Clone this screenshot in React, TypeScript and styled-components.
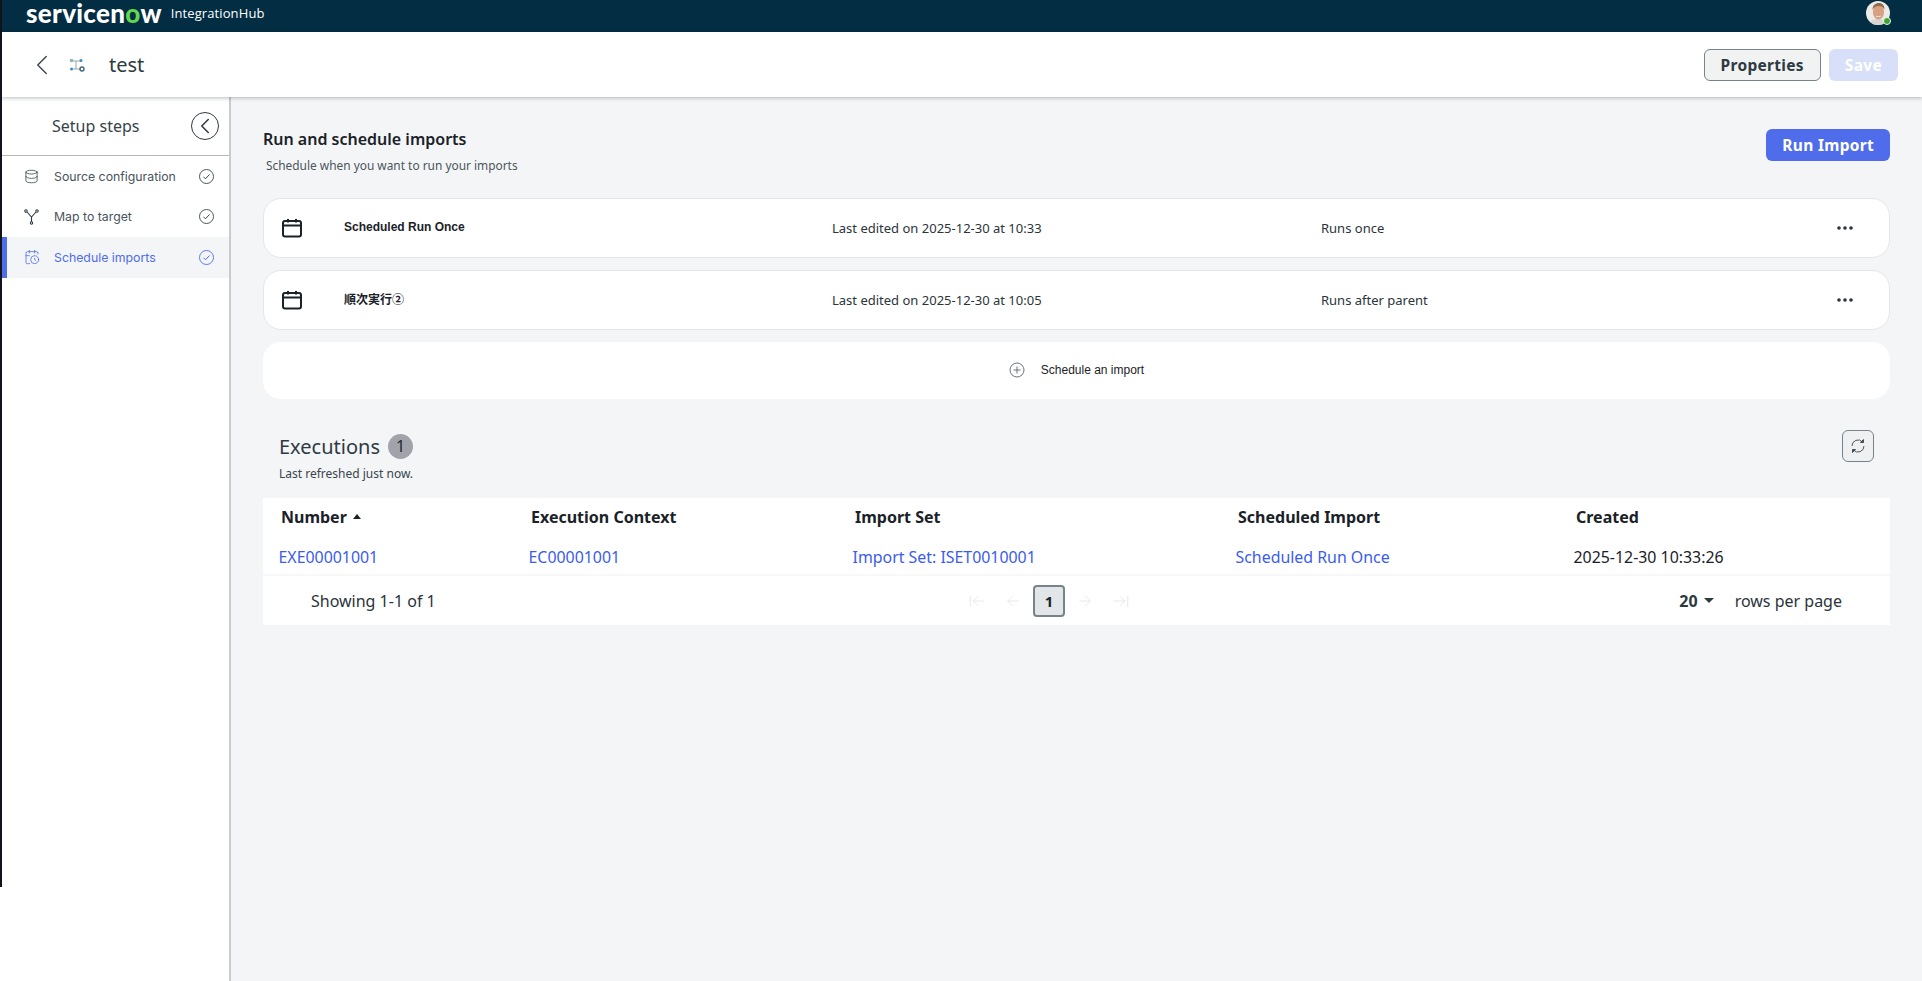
import styled, { createGlobalStyle } from 'styled-components'
import {
  ArrowLeft,
  ArrowLeftToLine,
  ArrowRight,
  ArrowRightToLine,
  CalendarClock,
  ChevronLeft,
  Database,
} from 'lucide-react'

const GlobalStyle = createGlobalStyle`
  html, body { margin: 0; padding: 0; height: 100%; overflow: hidden; background: #fff; }
  * { box-sizing: border-box; }
  body { font-family: "Noto Sans", "Open Sans", "Noto Sans CJK JP", sans-serif; color: #1a2228; }
`

const Page = styled.div`
  position: relative;
  display: flex;
  flex-direction: column;
  width: 100%;
  height: 100vh;
`
const EdgeStrip = styled.div`
  position: absolute;
  left: 0;
  top: 0;
  width: 2px;
  height: 887px;
  background: #10141a;
  z-index: 5;
`
const TopBar = styled.header`
  display: flex;
  align-items: flex-start;
  justify-content: space-between;
  height: 32px;
  padding: 0 32px 0 26px;
  background: #032d42;
  flex: none;
`
const Brand = styled.div`
  display: flex;
  align-items: center;
  gap: 9px;
  color: #fff;
`
const Logo = styled.span`
  font-family: "Lato", sans-serif;
  font-weight: 900;
  font-size: 26px;
  line-height: 26px;
  letter-spacing: 0.3px;
  b { color: #62d84e; font-weight: 900; }
`
const Product = styled.span`
  font-size: 13px;
  line-height: 18px;
  font-family: "Open Sans", sans-serif;
  letter-spacing: 0.1px;
`
const AvatarWrap = styled.div`
  position: relative;
  width: 24px;
  height: 24px;
  margin-top: 1px;
`
const StatusDot = styled.span`
  position: absolute;
  right: -1px;
  bottom: 0;
  width: 8px;
  height: 8px;
  border-radius: 50%;
  background: #3ea62f;
  border: 1px solid #e9f5e6;
`
const SubHeader = styled.div`
  display: flex;
  align-items: center;
  height: 65px;
  padding: 0 24px 0 25px;
  background: #fff;
  box-shadow: 0 1px 4px rgba(20, 30, 40, 0.3);
  position: relative;
  z-index: 2;
  flex: none;
`
const BackButton = styled.span`
  display: flex;
  color: #3c474f;
`
const FlowIcon = styled.svg`
  width: 16px;
  height: 14px;
  margin-left: 10px;
`
const Title = styled.h1`
  margin: 0 0 0 24px;
  font-size: 20px;
  font-weight: 400;
  color: #2e3a42;
  flex: 1;
`
const ActionButton = styled.button<{ $kind: 'outline' | 'disabled' | 'primary' }>`
  height: 32px;
  padding: 0 16px;
  border-radius: 6px;
  font-family: "Noto Sans", sans-serif;
  font-size: 15.5px;
  font-weight: 700;
  letter-spacing: 0.3px;
  border: ${(p) => (p.$kind === 'outline' ? '1px solid #77838b' : 'none')};
  color: ${(p) => (p.$kind === 'outline' ? '#2e3a42' : '#fff')};
  background: ${(p) =>
    p.$kind === 'outline' ? '#f1f3f3' : p.$kind === 'disabled' ? '#d7dff9' : '#4f6deb'};
`
const SaveButton = styled(ActionButton)`
  margin-left: 8px;
`
const Body = styled.div`
  display: flex;
  flex: 1;
  min-height: 0;
  padding-left: 2px;
`
const Sidebar = styled.aside`
  width: 229px;
  flex: none;
  background: #fff;
  border-right: 2px solid #c9cccf;
`
const SideTitle = styled.div`
  position: relative;
  display: flex;
  align-items: center;
  height: 59px;
  padding-left: 50px;
  font-size: 16px;
  color: #36424a;
  border-bottom: 1px solid #b4b8bb;
`
const CollapseButton = styled.span`
  position: absolute;
  right: 10px;
  top: 15px;
  display: flex;
  align-items: center;
  justify-content: center;
  width: 28px;
  height: 28px;
  border-radius: 50%;
  border: 1.5px solid #2e3a42;
  color: #2e3a42;
  svg { flex: none; }
`
const StepList = styled.nav`
  display: flex;
  flex-direction: column;
`
const Step = styled.div<{ $active?: boolean }>`
  display: flex;
  align-items: center;
  height: 40.5px;
  padding-left: ${(p) => (p.$active ? '17px' : '22px')};
  padding-right: 15px;
  font-family: "Inter", sans-serif;
  font-size: 12.3px;
  color: ${(p) => (p.$active ? '#4f6deb' : '#48545c')};
  background: ${(p) => (p.$active ? '#f3f5f7' : 'transparent')};
  border-left: ${(p) => (p.$active ? '5px solid #4f6deb' : 'none')};
`
const StepIcon = styled.span<{ $active?: boolean }>`
  display: flex;
  width: 30px;
  color: ${(p) => (p.$active ? '#4f6deb' : '#2e3a42')};
`
const StepLabel = styled.span`
  flex: 1;
`
const Main = styled.main`
  flex: 1;
  min-width: 0;
  background: #f4f5f7;
  padding: 32px 32px 0 32px;
`
const SectionHead = styled.div`
  display: flex;
  justify-content: space-between;
  height: 69px;
`
const Heading = styled.h2`
  margin: 0;
  font-size: 16px;
  line-height: 20px;
  font-weight: 600;
  color: #1a2228;
`
const SubHeading = styled.p`
  margin: 8px 0 0 3px;
  font-size: 11.9px;
  line-height: 17px;
  color: #4a555c;
`
const Cards = styled.div`
  display: flex;
  flex-direction: column;
  gap: 12px;
`
const ScheduleCard = styled.div`
  display: grid;
  grid-template-columns: 80px 488px 489px 1fr 53px;
  align-items: center;
  height: 60px;
  background: #fff;
  border: 1px solid #e3e6e8;
  border-radius: 18px;
  font-size: 13px;
  color: #2a343b;
`
const CardIcon = styled.span`
  display: flex;
  padding-left: 17px;
`
const CardName = styled.span`
  font-family: "Liberation Sans", "Noto Sans CJK JP", sans-serif;
  font-size: 12px;
  font-weight: 700;
  color: #1a2228;
  margin-top: -3px;
`
const AddCard = styled.div`
  display: flex;
  align-items: center;
  justify-content: center;
  gap: 16px;
  height: 57px;
  padding-bottom: 2px;
  background: #fff;
  border-radius: 18px;
  font-family: "Liberation Sans", sans-serif;
  font-size: 12px;
  color: #1a2228;
`
const ExecHead = styled.div`
  display: flex;
  justify-content: space-between;
  padding: 34px 16px 0;
  height: 99px;
`
const ExecTitleRow = styled.div`
  display: flex;
  align-items: center;
  gap: 8px;
  height: 26px;
`
const ExecTitle = styled.span`
  font-size: 20px;
  color: #2e3a42;
`
const CountBadge = styled.span`
  display: flex;
  align-items: center;
  justify-content: center;
  width: 25px;
  height: 25px;
  border-radius: 50%;
  background: #a2a2ab;
  color: #23282d;
  font-size: 16px;
`
const Refreshed = styled.div`
  margin-top: 7px;
  font-size: 12px;
  line-height: 16px;
  color: #3a454c;
`
const RefreshButton = styled.span`
  display: flex;
  align-items: center;
  justify-content: center;
  width: 32px;
  height: 32px;
  margin-top: -3px;
  border: 1px solid #77838b;
  border-radius: 6px;
  background: #eef0f1;
  color: #3c474f;
`
const Table = styled.div`
  background: #fff;
`
const Row = styled.div<{ $head?: boolean }>`
  display: grid;
  grid-template-columns: 250px 324px 383px 338px 1fr;
  align-items: center;
  height: ${(p) => (p.$head ? '38px' : '40px')};
  padding-left: ${(p) => (p.$head ? '18px' : '15.5px')};
  padding-top: ${(p) => (p.$head ? '0' : '4px')};
  font-weight: ${(p) => (p.$head ? 700 : 400)};
  color: #1a2228;
  border-bottom: ${(p) => (p.$head ? 'none' : '2px solid #f8f8f9')};
`
const HeadCell = styled.span`
  display: flex;
  align-items: center;
  gap: 6px;
  font-size: 16px;
`
const SortCaret = styled.i`
  width: 0;
  height: 0;
  border-left: 4.5px solid transparent;
  border-right: 4.5px solid transparent;
  border-bottom: 5px solid #1a2228;
  margin-top: -2px;
`
const LinkCell = styled.a`
  color: #3b5ced;
  font-size: 15.9px;
`
const PlainCell = styled.span`
  font-size: 15.9px;
`
const Footer = styled.div`
  display: grid;
  grid-template-columns: 657px auto 1fr;
  align-items: center;
  height: 49px;
  padding: 0 48px;
  font-size: 16px;
  color: #2a343b;
`
const Pager = styled.div`
  display: flex;
  align-items: center;
  gap: 18px;
  color: #dfe2e4;
`
const PageNumber = styled.span`
  display: flex;
  align-items: center;
  justify-content: center;
  width: 32px;
  height: 32px;
  margin: 0 -7px;
  border: 2px solid #77838b;
  border-radius: 4px;
  background: #e3e6e8;
  color: #1a2228;
  font-size: 15px;
  font-weight: 700;
`
const RowsPerPage = styled.div`
  display: flex;
  align-items: center;
  justify-content: flex-end;
`
const RowsValue = styled.span`
  font-weight: 700;
  color: #2e3a42;
`
const DownCaret = styled.i`
  width: 0;
  height: 0;
  margin: 0 21px 0 6px;
  border-left: 5.5px solid transparent;
  border-right: 5.5px solid transparent;
  border-top: 5.5px solid #2e3a42;
`

function Avatar() {
  return (
    <svg width="24" height="24" viewBox="0 0 24 24">
      <defs>
        <clipPath id="av">
          <circle cx="12" cy="12" r="12" />
        </clipPath>
      </defs>
      <g clipPath="url(#av)">
        <rect width="24" height="24" fill="#ecebe8" />
        <path d="M2 26c1-6 5-8 10-8s9 2 10 8z" fill="#d9d5d0" />
        <ellipse cx="12.5" cy="11" rx="5.6" ry="7.4" fill="#d9a184" />
        <path d="M6.500 9c0-5 3-7 6.500-7s5.500 2.500 5.500 6.500c-1.500-2.500-3-3.500-6-3.500-2.500 0-5 1.500-6 4z" fill="#8f6a4c" />
        <path d="M9.500 14.500c1.500 1.200 4 1.200 5.500 0-.5 2-4.800 2-5.500 0z" fill="#fff" />
      </g>
    </svg>
  )
}

function CheckBadge({ color }: { color: string }) {
  return (
    <svg width="15" height="15" viewBox="0 0 15 15" fill="none" stroke={color}>
      <circle cx="7.500" cy="7.500" r="7" strokeWidth="0.9" />
      <path d="M4.500 7.800l2 2 4-4.300" strokeWidth="1" />
    </svg>
  )
}

function MapIcon() {
  return (
    <svg width="15" height="16" viewBox="0 0 15 16" fill="none" stroke="#2e3a42" strokeWidth="1.100">
      <circle cx="2" cy="2" r="1.200" />
      <circle cx="13" cy="2" r="1.200" />
      <circle cx="7.500" cy="14" r="1.200" />
      <path d="M3 3l4.500 5L12 3M7.500 8v5" />
    </svg>
  )
}

function CalendarIcon() {
  return (
    <svg width="22" height="20" viewBox="0 0 22 20" fill="none" stroke="#1a2228" strokeWidth="2">
      <rect x="2" y="3" width="18" height="15.500" rx="2" />
      <path d="M2 7.500h18M7 1v3.500M15 1v3.500" />
    </svg>
  )
}

function PlusIcon() {
  return (
    <svg width="16" height="16" viewBox="0 0 16 16" fill="none" stroke="#5a656c" strokeWidth="0.900">
      <circle cx="8" cy="8" r="7" />
      <path d="M8 4.500v7M4.500 8h7" />
    </svg>
  )
}

function DotsIcon() {
  return (
    <svg width="18" height="6" viewBox="0 0 18 6" fill="#2a343b">
      <circle cx="3" cy="3" r="1.800" />
      <circle cx="9" cy="3" r="1.800" />
      <circle cx="15" cy="3" r="1.800" />
    </svg>
  )
}

function SyncIcon() {
  return (
    <svg width="16" height="16" viewBox="0 0 16 16" fill="none" stroke="#3c474f" strokeWidth="0.900">
      <path d="M2 8a6 6 0 0 1 10.500-4" />
      <path d="M14 8a6 6 0 0 1-10.500 4" />
      <path d="M13.500 1.500v3h-3z" fill="#3c474f" />
      <path d="M2.500 14.500v-3h3z" fill="#3c474f" />
    </svg>
  )
}

const schedules = [
  { name: 'Scheduled Run Once', edited: 'Last edited on 2025-12-30 at 10:33', runs: 'Runs once' },
  { name: '順次実行②', edited: 'Last edited on 2025-12-30 at 10:05', runs: 'Runs after parent' },
]

const steps = [
  { label: 'Source configuration', icon: <Database size={15} strokeWidth={1.2} /> },
  { label: 'Map to target', icon: <MapIcon /> },
  { label: 'Schedule imports', icon: <CalendarClock size={16} strokeWidth={1.2} />, active: true },
]

export default function App() {
  return (
    <Page>
      <GlobalStyle />
      <EdgeStrip />
      <TopBar>
        <Brand>
          <Logo>
            servicen<b>o</b>w
          </Logo>
          <Product>IntegrationHub</Product>
        </Brand>
        <AvatarWrap>
          <Avatar />
          <StatusDot />
        </AvatarWrap>
      </TopBar>
      <SubHeader>
        <BackButton>
          <ChevronLeft size={34} strokeWidth={1} />
        </BackButton>
        <FlowIcon viewBox="0 0 16 14" fill="none">
          <path d="M3 3h9M3 11h8M7 3v8" stroke="#9aa5ab" strokeWidth="1" />
          <circle cx="2.500" cy="2.500" r="1.800" fill="#8fb7ad" />
          <circle cx="12" cy="2.500" r="1.500" fill="#3f8fc4" />
          <circle cx="2.500" cy="11" r="1.500" fill="#3f8fc4" />
          <circle cx="13" cy="11" r="2" fill="none" stroke="#3a6a85" strokeWidth="1.400" />
        </FlowIcon>
        <Title>test</Title>
        <ActionButton $kind="outline">Properties</ActionButton>
        <SaveButton $kind="disabled">Save</SaveButton>
      </SubHeader>
      <Body>
        <Sidebar>
          <SideTitle>
            Setup steps
            <CollapseButton>
              <ChevronLeft size={26} strokeWidth={1.4} />
            </CollapseButton>
          </SideTitle>
          <StepList>
            {steps.map((s) => (
              <Step key={s.label} $active={s.active}>
                <StepIcon $active={s.active}>{s.icon}</StepIcon>
                <StepLabel>{s.label}</StepLabel>
                <CheckBadge color={s.active ? '#4f6deb' : '#3a454c'} />
              </Step>
            ))}
          </StepList>
        </Sidebar>
        <Main>
          <SectionHead>
            <div>
              <Heading>Run and schedule imports</Heading>
              <SubHeading>Schedule when you want to run your imports</SubHeading>
            </div>
            <ActionButton $kind="primary">Run Import</ActionButton>
          </SectionHead>
          <Cards>
            {schedules.map((s) => (
              <ScheduleCard key={s.name}>
                <CardIcon>
                  <CalendarIcon />
                </CardIcon>
                <CardName>{s.name}</CardName>
                <span>{s.edited}</span>
                <span>{s.runs}</span>
                <DotsIcon />
              </ScheduleCard>
            ))}
            <AddCard>
              <PlusIcon />
              Schedule an import
            </AddCard>
          </Cards>
          <ExecHead>
            <div>
              <ExecTitleRow>
                <ExecTitle>Executions</ExecTitle>
                <CountBadge>1</CountBadge>
              </ExecTitleRow>
              <Refreshed>Last refreshed just now.</Refreshed>
            </div>
            <RefreshButton>
              <SyncIcon />
            </RefreshButton>
          </ExecHead>
          <Table>
            <Row $head>
              <HeadCell>
                Number <SortCaret />
              </HeadCell>
              <HeadCell>Execution Context</HeadCell>
              <HeadCell>Import Set</HeadCell>
              <HeadCell>Scheduled Import</HeadCell>
              <HeadCell>Created</HeadCell>
            </Row>
            <Row>
              <LinkCell>EXE00001001</LinkCell>
              <LinkCell>EC00001001</LinkCell>
              <LinkCell>Import Set: ISET0010001</LinkCell>
              <LinkCell>Scheduled Run Once</LinkCell>
              <PlainCell>2025-12-30 10:33:26</PlainCell>
            </Row>
            <Footer>
              <span>Showing 1-1 of 1</span>
              <Pager>
                <ArrowLeftToLine size={18} strokeWidth={1} />
                <ArrowLeft size={18} strokeWidth={1} />
                <PageNumber>1</PageNumber>
                <ArrowRight size={18} strokeWidth={1} />
                <ArrowRightToLine size={18} strokeWidth={1} />
              </Pager>
              <RowsPerPage>
                <RowsValue>20</RowsValue>
                <DownCaret />
                rows per page
              </RowsPerPage>
            </Footer>
          </Table>
        </Main>
      </Body>
    </Page>
  )
}
